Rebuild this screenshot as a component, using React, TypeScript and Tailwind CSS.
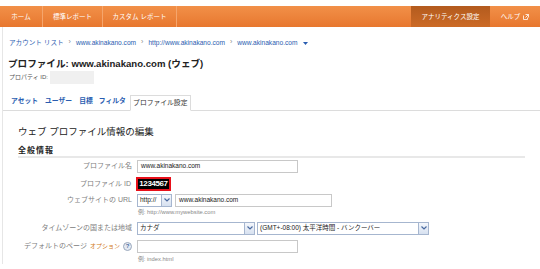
import React from "react";

const font = { fontFamily: '"Liberation Sans", "Noto Sans CJK JP", Arial, sans-serif' };

function Arrow() {
  return <span className="mx-[5px] inline-block text-[7px] text-[#888]">›</span>;
}

function SelArrow() {
  return (
    <span className="flex h-full w-[10px] items-center justify-center border-l border-[#a6b6cf] bg-gradient-to-b from-[#f4f7fc] to-[#d7e1f0]">
      <svg width="6" height="4" viewBox="0 0 6 4">
        <path d="M0.5 0.5 L3 3 L5.5 0.5" stroke="#4a6aa0" strokeWidth="1.2" fill="none" />
      </svg>
    </span>
  );
}

export default function App() {
  return (
    <div className="relative h-[269px] w-[540px] overflow-hidden whitespace-nowrap bg-white text-[#333]" style={font}>
      <div className="h-[6px] bg-white" />
      {/* nav */}
      <div className="flex h-[21px] items-stretch bg-gradient-to-b from-[#f29048] to-[#e7772e] text-[6.5px] text-white">
        <div className="flex w-[43px] items-center justify-center border-r border-[#f5a56c]">ホーム</div>
        <div className="flex w-[60px] items-center justify-center border-r border-[#f5a56c]">標準レポート</div>
        <div className="flex w-[74px] items-center justify-center border-r border-[#f5a56c]">カスタム レポート</div>
        <div className="flex-1" />
        <div className="flex w-[79px] items-center justify-center bg-gradient-to-b from-[#b35b1e] to-[#cc6a26]">アナリティクス設定</div>
        <div className="flex w-[50px] items-center justify-center gap-[3px]">
          ヘルプ
          <svg width="6" height="6" viewBox="0 0 6 6">
            <path d="M0.5 1.5 V5.5 H4.5 V3.5 M2.5 0.5 H5.5 V3.5 M5.5 0.5 L2.5 3.5" stroke="#fff" strokeWidth="0.8" fill="none" />
          </svg>
        </div>
      </div>
      {/* body */}
      <div className="ml-[2px] border-l border-[#e6e6e6]">
        <div className="flex h-[30px] items-center pl-[6px] pt-[1px] text-[6.6px] text-[#2a5db0]">
          <span>アカウント リスト</span>
          <Arrow />
          <span>www.akinakano.com</span>
          <Arrow />
          <span>http://www.akinakano.com</span>
          <Arrow />
          <span>www.akinakano.com</span>
          <svg className="ml-[6px] mt-[2px]" width="5" height="3" viewBox="0 0 5 3">
            <path d="M0 0 H5 L2.5 3 Z" fill="#2a5db0" />
          </svg>
        </div>
        <div className="pl-[5px] text-[9.6px] font-bold leading-[13px] text-[#222]">プロファイル: www.akinakano.com (ウェブ)</div>
        <div className="flex h-[14px] items-center pl-[6px] text-[6px] text-[#555]">
          <span>プロパティ ID:</span>
          <span className="ml-[2px] h-[13px] w-[44px] bg-[#f0f0f0]" />
        </div>
        {/* tabs */}
        <div className="mt-[11px] flex h-[16px] items-end border-b border-[#dcdcdc] pl-[8px] text-[6.8px] font-bold text-[#2a5db0]">
          <span className="mb-[4px] mr-[7px]">アセット</span>
          <span className="mb-[4px] mr-[7px]">ユーザー</span>
          <span className="mb-[4px] mr-[6px]">目標</span>
          <span className="mb-[4px] mr-[4px]">フィルタ</span>
          <span className="-mb-px flex h-[16px] w-[61px] items-center justify-center border border-b-white border-[#dcdcdc] bg-white font-normal text-[#333]">プロファイル設定</span>
        </div>
        {/* panel */}
        <div className="pl-[15px] pr-[15px]">
          <div className="pt-[14px] text-[9.5px] leading-[14px] text-[#222]">ウェブ プロファイル情報の編集</div>
          <div className="mt-[7px] border-b-2 border-[#e8e8e8] text-[8px] font-bold leading-[10px] tracking-[1px] text-[#222]">全般情報</div>
          <div className="text-[7px] text-[#808080]">
            {/* row 1 */}
            <div className="mt-[1px] flex h-[14px] items-center">
              <span className="w-[119px] pr-[5px] text-right">プロファイル名</span>
              <div className="flex h-[13px] w-[161px] items-center border border-[#c8c8c8] pl-[3px] text-[6.5px] text-[#222]">www.akinakano.com</div>
            </div>
            {/* row 2 */}
            <div className="mt-[4px] flex h-[14px] items-center">
              <span className="w-[118px] pr-[5px] text-right">プロファイル ID</span>
              <span className="flex h-[14px] w-[35px] items-center justify-center border-2 border-[#e8101a] bg-black text-[8px] font-bold tracking-[-0.4px] text-white">1234567</span>
            </div>
            {/* row 3 */}
            <div className="mt-[2px] flex h-[14px] items-center">
              <span className="w-[119px] pr-[5px] text-right">ウェブサイトの URL</span>
              <div className="flex h-[13px] w-[35px] items-center border border-[#a6b6cf] text-[6.5px] text-[#222]">
                <span className="flex-1 pl-[2px]">http://</span>
                <SelArrow />
              </div>
              <div className="ml-[3px] flex h-[13px] w-[157px] items-center border border-[#c8c8c8] pl-[3px] text-[6.5px] text-[#222]">www.akinakano.com</div>
            </div>
            <div className="flex h-[10px] items-center pl-[120px] text-[5.8px] text-[#888]">例: http://www.mywebsite.com</div>
            {/* row 4 */}
            <div className="mt-[4px] flex h-[14px] items-center">
              <span className="w-[119px] pr-[5px] text-right">タイムゾーンの国または地域</span>
              <div className="flex h-[13px] w-[118px] items-center border border-[#a6b6cf] text-[6.5px] text-[#222]">
                <span className="flex-1 pl-[2px]">カナダ</span>
                <SelArrow />
              </div>
              <div className="ml-[2px] flex h-[13px] w-[172px] items-center border border-[#a6b6cf] text-[6.5px] text-[#222]">
                <span className="flex-1 pl-[2px]">(GMT+-08:00) 太平洋時間 - バンクーバー</span>
                <SelArrow />
              </div>
            </div>
            {/* row 5 */}
            <div className="mt-[4px] flex h-[14px] items-center">
              <span className="flex w-[119px] items-center justify-end pr-[5px]">
                デフォルトのページ
                <span className="ml-[3px] text-[6px] text-[#d07818]">オプション</span>
                <span className="ml-[3px] flex h-[9px] w-[9px] items-center justify-center rounded-full border border-[#9aa8bc] bg-[#e4eaf3] text-[6px] font-bold text-[#4a6aa0]">?</span>
              </span>
              <div className="h-[13px] w-[161px] border border-[#c8c8c8]" />
            </div>
            <div className="mt-[1px] flex h-[10px] items-center pl-[120px] text-[5.8px] text-[#888]">例: index.html</div>
          </div>
        </div>
      </div>
    </div>
  );
}
